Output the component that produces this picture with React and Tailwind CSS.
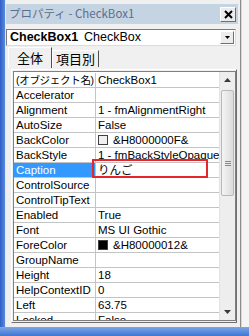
const rows = [
  { name: "(オブジェクト名)", value: "CheckBox1", jp: true },
  { name: "Accelerator", value: "" },
  { name: "Alignment", value: "1 - fmAlignmentRight" },
  { name: "AutoSize", value: "False" },
  { name: "BackColor", value: "&H8000000F&", swatch: "bg-[#f0f0f0]" },
  { name: "BackStyle", value: "1 - fmBackStyleOpaque" },
  { name: "Caption", value: "りんご", selected: true },
  { name: "ControlSource", value: "" },
  { name: "ControlTipText", value: "" },
  { name: "Enabled", value: "True" },
  { name: "Font", value: "MS UI Gothic" },
  { name: "ForeColor", value: "&H80000012&", swatch: "bg-black" },
  { name: "GroupName", value: "" },
  { name: "Height", value: "18" },
  { name: "HelpContextID", value: "0" },
  { name: "Left", value: "63.75" },
  { name: "Locked", value: "False" },
];

const font = { fontFamily: '"Liberation Sans", "Noto Sans CJK JP", sans-serif' };

const Row = ({ row }) => (
  <div className="flex h-[15px] shrink-0 border-b border-[#c4c4c4]">
    <div
      className={`w-[82px] shrink-0 border-r border-[#c4c4c4] pl-[2px] leading-[14px] whitespace-nowrap overflow-hidden ${
        row.selected ? "bg-[#3399ff] text-white" : "text-black"
      } ${row.jp ? "text-[10.5px] tracking-[-0.3px]" : ""}`}
    >
      {row.name}
    </div>
    <div className="flex-1 flex items-center pl-[2px] leading-[14px] whitespace-nowrap overflow-hidden text-black">
      {row.swatch && (
        <span className={`w-[10px] h-[10px] mr-[5px] border border-[#404040] shrink-0 ${row.swatch}`} />
      )}
      {row.value}
    </div>
  </div>
);

const ScrollBar = () => (
  <div className="w-[16px] shrink-0 flex flex-col bg-[#eeeeee] border-l border-[#e2e2e2]">
    <div className="h-[16px] flex items-center justify-center">
      <svg width="7" height="4" viewBox="0 0 7 4">
        <path d="M3.5 0 L7 4 L0 4 Z" fill="#3a3a3a" />
      </svg>
    </div>
    <div className="mx-[1px] mt-[2px] h-[106px] rounded-[2px] border border-[#b8b8b8] bg-gradient-to-r from-[#f4f4f4] to-[#dcdcdc] flex items-center justify-center">
      <div className="flex flex-col gap-[1px] pt-[40px]">
        <div className="w-[6px] h-px bg-[#8a8a8a]" />
        <div className="w-[6px] h-px bg-[#8a8a8a]" />
        <div className="w-[6px] h-px bg-[#8a8a8a]" />
      </div>
    </div>
    <div className="flex-1" />
    <div className="h-[16px] flex items-center justify-center">
      <svg width="7" height="4" viewBox="0 0 7 4">
        <path d="M0 0 L7 0 L3.5 4 Z" fill="#3a3a3a" />
      </svg>
    </div>
  </div>
);

export default function App() {
  return (
    <div className="w-[249px] h-[336px] flex flex-col overflow-hidden bg-[#f0f0f0] text-[11.5px]" style={font}>
      <div className="flex flex-1 min-h-0">
        {/* left window edge */}
        <div className="w-[5px] shrink-0 bg-gradient-to-r from-[#2f5fc4] to-[#5a8ae0]" />
        <div className="w-px shrink-0 bg-[#dfe8f5]" />

        {/* properties pane */}
        <div className="flex-1 min-w-0 flex flex-col pt-[4px] pr-[2px]">
          {/* title bar */}
          <div className="h-[20px] shrink-0 flex items-center justify-between bg-[#c5d4e3] pl-[3px] pr-[2px]">
            <span className="text-[11.5px] text-[#5b6f8c]" style={{ fontFamily: '"Noto Sans CJK JP", "Liberation Sans", sans-serif' }}>
              プロパティ - CheckBox1
            </span>
            <div className="w-[16px] h-[15px] flex items-center justify-center bg-[#ececec] border border-t-white border-l-white border-r-[#707070] border-b-[#707070]">
              <svg width="9" height="9" viewBox="0 0 9 9">
                <path d="M1 1 L8 8 M8 1 L1 8" stroke="#000" strokeWidth="2" />
              </svg>
            </div>
          </div>

          {/* object combobox */}
          <div className="mt-[5px] mr-[2px] h-[17px] shrink-0 flex items-center bg-white border border-[#7a7a7a] border-r-[#dcdcdc] border-b-[#dcdcdc]">
            <span className="pl-[3px] font-bold text-[12.5px] text-black">CheckBox1</span>
            <span className="pl-[6px] text-[12.5px] text-black flex-1">CheckBox</span>
            <div className="w-[14px] h-[13px] mr-px flex items-center justify-center bg-[#ececec] border border-t-white border-l-white border-r-[#707070] border-b-[#707070]">
              <svg width="5" height="3" viewBox="0 0 5 3">
                <path d="M0 0 L5 0 L2.5 3 Z" fill="#000" />
              </svg>
            </div>
          </div>

          {/* tabs */}
          <div className="mt-[2px] h-[20px] shrink-0 flex items-end pl-[2px] relative z-10" style={{ fontFamily: '"Noto Sans CJK JP", sans-serif' }}>
            <div className="h-[21px] w-[44px] flex items-center justify-center bg-[#f0f0f0] border border-b-0 border-t-white border-l-white border-r-[#505050] text-[13px] text-black">
              全体
            </div>
            <div className="h-[17px] w-[47px] flex items-center justify-center border border-b-0 border-t-white border-l-white border-r-[#505050] text-[13px] text-black mb-px">
              項目別
            </div>
          </div>

          {/* property grid */}
          <div className="mt-[1px] ml-[5px] mr-[1px] mb-[4px] flex-1 min-h-0 flex border border-t-white border-l-white border-r-[#707070] border-b-[#707070] p-[1px]">
            <div className="flex-1 min-h-0 flex border border-[#808080] bg-white relative">
              <div className="flex-1 min-w-0 flex flex-col overflow-hidden pt-px">
                {rows.map((r) => (
                  <Row key={r.name} row={r} />
                ))}
              </div>
              <ScrollBar />
              {/* red annotation box */}
              <div className="absolute left-[78px] top-[87px] w-[116px] h-[19px] border-2 border-[#e5262c] pointer-events-none" />
            </div>
          </div>
        </div>

        {/* right edge */}
        <div className="w-px shrink-0 bg-[#8c8c8c]" />
        <div className="w-[8px] shrink-0 bg-[#f4f4f4] border-l border-[#d8d8d8]" />
      </div>

      {/* bottom window edge */}
      <div className="h-[9px] shrink-0 bg-gradient-to-b from-[#7fa6e4] to-[#3f74d4]" />
    </div>
  );
}
